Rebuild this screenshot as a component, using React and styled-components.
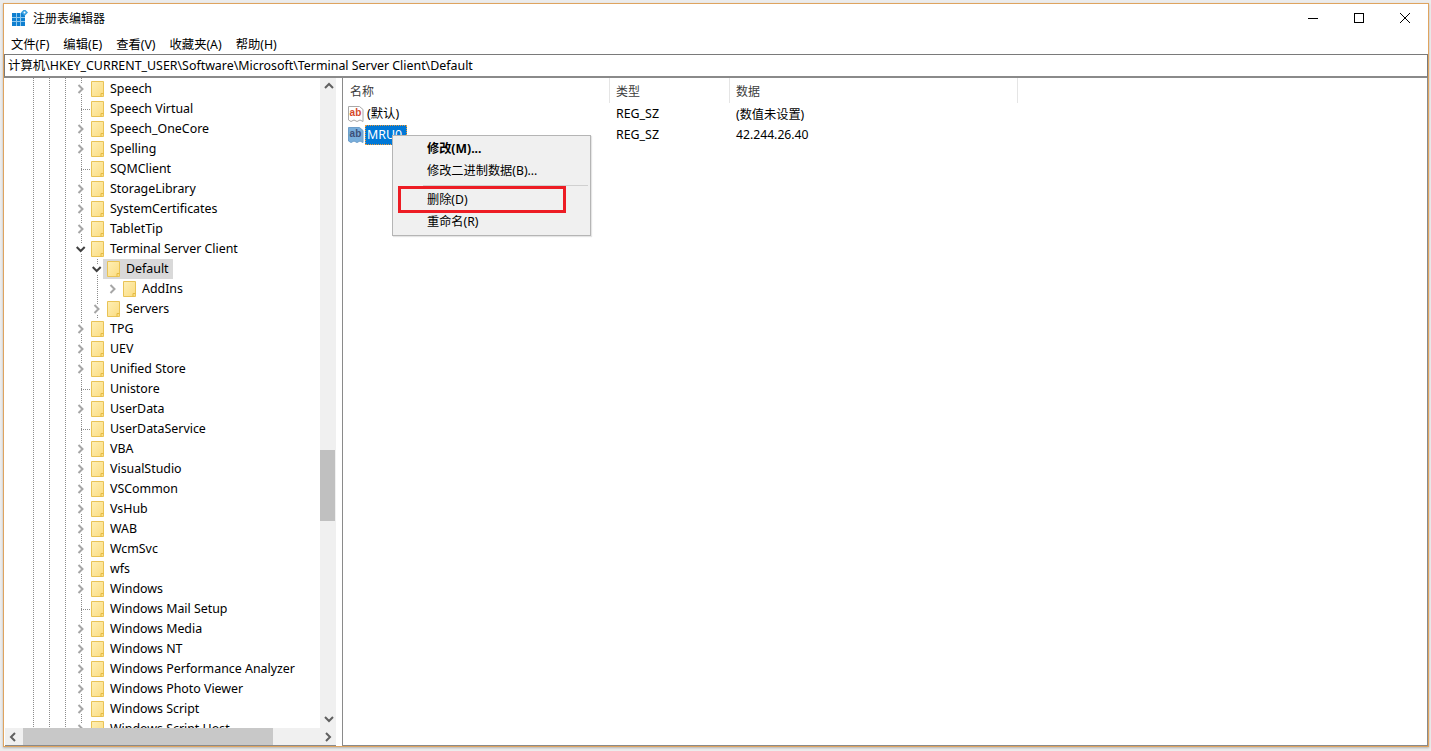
import styled, { createGlobalStyle } from "styled-components";

const GlobalStyle = createGlobalStyle`
    html, body {
        margin: 0;
        padding: 0;
        background: #ececec;
    }
    * {
        box-sizing: border-box;
    }
`;

const treeItems = [
    ["Speech", 0, "closed"],
    ["Speech Virtual", 0, "leaf"],
    ["Speech_OneCore", 0, "closed"],
    ["Spelling", 0, "closed"],
    ["SQMClient", 0, "leaf"],
    ["StorageLibrary", 0, "closed"],
    ["SystemCertificates", 0, "closed"],
    ["TabletTip", 0, "closed"],
    ["Terminal Server Client", 0, "open"],
    ["Default", 1, "open", true],
    ["AddIns", 2, "closed"],
    ["Servers", 1, "closed"],
    ["TPG", 0, "closed"],
    ["UEV", 0, "closed"],
    ["Unified Store", 0, "closed"],
    ["Unistore", 0, "leaf"],
    ["UserData", 0, "closed"],
    ["UserDataService", 0, "leaf"],
    ["VBA", 0, "closed"],
    ["VisualStudio", 0, "closed"],
    ["VSCommon", 0, "closed"],
    ["VsHub", 0, "closed"],
    ["WAB", 0, "closed"],
    ["WcmSvc", 0, "closed"],
    ["wfs", 0, "closed"],
    ["Windows", 0, "closed"],
    ["Windows Mail Setup", 0, "leaf"],
    ["Windows Media", 0, "closed"],
    ["Windows NT", 0, "closed"],
    ["Windows Performance Analyzer", 0, "closed"],
    ["Windows Photo Viewer", 0, "closed"],
    ["Windows Script", 0, "closed"],
    ["Windows Script Host", 0, "closed"],
];

const menus = ["文件(F)", "编辑(E)", "查看(V)", "收藏夹(A)", "帮助(H)"];

const RegeditIcon = () => (
    <svg width="16" height="16" viewBox="0 0 16 16">
        <rect x="0" y="3" width="13" height="13" fill="#0e7fd0" />
        <path d="M4.5 3v13M8.5 3v13M0 7.5h13M0 11.5h13" stroke="#8ec8ee" strokeWidth="1" />
        <rect x="10" y="0" width="5" height="5" transform="rotate(45 12.5 2.5)" fill="#3aa0e0" />
        <circle cx="12.5" cy="2.5" r="1" fill="#ffffff" />
    </svg>
);

const FolderIcon = () => (
    <svg width="13" height="16" viewBox="0 0 13 16">
        <defs>
            <linearGradient id="folderFill" x1="0" y1="0" x2="1" y2="1">
                <stop offset="0" stopColor="#feefb6" />
                <stop offset="1" stopColor="#fbdc80" />
            </linearGradient>
        </defs>
        <path d="M0.5 0.5h12v15h-12z" fill="url(#folderFill)" stroke="#e9c356" />
        <path d="M10 15.5v-3h2.5" fill="none" stroke="#e5bb42" />
    </svg>
);

const Chevron = ({ open }) => (
    <ChevronBox width="10" height="10" viewBox="0 0 10 10">
        {open ? (
            <path d="M0.7 3L4.7 7L8.7 3" fill="none" stroke="#404040" strokeWidth="2" />
        ) : (
            <path d="M2.5 1L6.5 5L2.5 9" fill="none" stroke="#a6a6a6" strokeWidth="2" />
        )}
    </ChevronBox>
);

const ValueIcon = ({ active }) => (
    <svg width="16" height="18" viewBox="0 0 16 18">
        <path
            d="M0.5 1.5h11l3.5 3v12l-3-1.5-3 1.5-3-1.5-3 1.5-2.5-1.5z"
            fill={active ? "#78aedc" : "#ffffff"}
            stroke={active ? "#6d9fcb" : "#a9a9a9"}
        />
        <text
            x="1.6"
            y="11"
            fontFamily="'Liberation Sans', sans-serif"
            fontWeight="700"
            fontSize="10"
            fill={active ? "#3c4f78" : "#d5492a"}
        >
            ab
        </text>
    </svg>
);

const ArrowIcon = ({ dir }) => {
    const paths = {
        up: "M1 6L5 2L9 6",
        down: "M1 2L5 6L9 2",
        left: "M6 1L2 5L6 9",
        right: "M3 1L7 5L3 9",
    };
    return (
        <svg width="10" height="10" viewBox="0 0 10 10">
            <path d={paths[dir]} fill="none" stroke="#606060" strokeWidth="2" />
        </svg>
    );
};

const App = () => {
    return (
        <>
            <GlobalStyle />
            <Page>
                <Window>
                    <TitleBar>
                        <TitleLeft>
                            <RegeditIcon />
                            <TitleText>注册表编辑器</TitleText>
                        </TitleLeft>
                        <Controls>
                            <ControlButton>
                                <svg width="10" height="10" viewBox="0 0 10 10">
                                    <path d="M0 5.5h10" stroke="#000" />
                                </svg>
                            </ControlButton>
                            <ControlButton>
                                <svg width="10" height="10" viewBox="0 0 10 10">
                                    <rect x="0.5" y="0.5" width="9" height="9" fill="none" stroke="#000" />
                                </svg>
                            </ControlButton>
                            <ControlButton>
                                <svg width="10" height="10" viewBox="0 0 10 10">
                                    <path d="M0 0L10 10M10 0L0 10" stroke="#000" />
                                </svg>
                            </ControlButton>
                        </Controls>
                    </TitleBar>
                    <MenuBar>
                        {menus.map((menu) => (
                            <MenuItem key={menu}>{menu}</MenuItem>
                        ))}
                    </MenuBar>
                    <AddressBar>计算机\HKEY_CURRENT_USER\Software\Microsoft\Terminal Server Client\Default</AddressBar>
                    <Panes>
                        <TreePane>
                            <TreeMain>
                                <TreeList>
                                    {treeItems.map(([name, depth, state, selected]) => (
                                        <TreeRow key={name} $depth={depth}>
                                            <Expander $leaf={state === "leaf"}>
                                                {state !== "leaf" && <Chevron open={state === "open"} />}
                                            </Expander>
                                            <TreeNode $selected={selected}>
                                                <FolderIcon />
                                                <TreeLabel>{name}</TreeLabel>
                                            </TreeNode>
                                        </TreeRow>
                                    ))}
                                </TreeList>
                                <VScroll>
                                    <ScrollArrow>
                                        <ArrowIcon dir="up" />
                                    </ScrollArrow>
                                    <VTrack>
                                        <VThumb />
                                    </VTrack>
                                    <ScrollArrow>
                                        <ArrowIcon dir="down" />
                                    </ScrollArrow>
                                </VScroll>
                            </TreeMain>
                            <HScroll>
                                <ScrollArrow>
                                    <ArrowIcon dir="left" />
                                </ScrollArrow>
                                <HTrack>
                                    <HThumb />
                                </HTrack>
                                <ScrollArrow>
                                    <ArrowIcon dir="right" />
                                </ScrollArrow>
                            </HScroll>
                        </TreePane>
                        <ListPane>
                            <ListHeader>
                                <HeaderCell $width={267} $first>名称</HeaderCell>
                                <HeaderCell $width={120}>类型</HeaderCell>
                                <HeaderCell $width={288}>数据</HeaderCell>
                            </ListHeader>
                            <ListRow>
                                <NameCell>
                                    <ValueIcon />
                                    <ValueName>(默认)</ValueName>
                                </NameCell>
                                <TypeCell>REG_SZ</TypeCell>
                                <DataCell>(数值未设置)</DataCell>
                            </ListRow>
                            <ListRow>
                                <NameCell>
                                    <ValueIcon active />
                                    <ValueName $selected>MRU0</ValueName>
                                </NameCell>
                                <TypeCell>REG_SZ</TypeCell>
                                <DataCell>42.244.26.40</DataCell>
                            </ListRow>
                            <ContextMenu>
                                <ContextItem $bold>修改(M)...</ContextItem>
                                <ContextItem>修改二进制数据(B)...</ContextItem>
                                <ContextSeparator />
                                <ContextItem $marked>删除(D)</ContextItem>
                                <ContextItem>重命名(R)</ContextItem>
                            </ContextMenu>
                        </ListPane>
                    </Panes>
                </Window>
            </Page>
        </>
    );
};

const uiFont = `"Noto Sans", "Noto Sans CJK SC", sans-serif`;
const dots = "repeating-linear-gradient(to bottom, #8c8c8c 0 1px, transparent 1px 2px)";

const Page = styled.div`
    width: 1431px;
    height: 751px;
    padding: 3px 2px 4px 3px;
    overflow: hidden;
    font-family: ${uiFont};
    font-size: 12.4px;
    color: #000000;
`;

const Window = styled.div`
    width: 100%;
    height: 100%;
    display: flex;
    flex-direction: column;
    background: #ffffff;
    border: 1px solid #dfa45f;
    box-shadow: 0 1px 2px rgba(0, 0, 0, 0.25);
`;

const TitleBar = styled.div`
    height: 30px;
    display: flex;
    align-items: center;
    justify-content: space-between;
    flex-shrink: 0;
`;

const TitleLeft = styled.div`
    display: flex;
    align-items: center;
    gap: 5px;
    padding-left: 8px;
    padding-bottom: 2px;
`;

const TitleText = styled.span`
    font-size: 12px;
`;

const Controls = styled.div`
    display: flex;
`;

const ControlButton = styled.div`
    width: 46px;
    height: 30px;
    padding-bottom: 2px;
    display: flex;
    align-items: center;
    justify-content: center;
`;

const MenuBar = styled.div`
    height: 20px;
    display: flex;
    align-items: center;
    gap: 14px;
    padding-left: 7px;
    flex-shrink: 0;
`;

const MenuItem = styled.span`
    font-size: 12.3px;
`;

const AddressBar = styled.div`
    height: 24px;
    flex-shrink: 0;
    display: flex;
    align-items: center;
    padding-left: 3px;
    padding-bottom: 2px;
    border-top: 1px solid #7a7a7a;
    border-left: 1px solid #7a7a7a;
    border-right: 1px solid #7a7a7a;
    border-bottom: 2px solid #8a8a8a;
`;

const Panes = styled.div`
    flex: 1;
    min-height: 0;
    display: flex;
    padding-left: 1px;
`;

const TreePane = styled.div`
    width: 331px;
    flex-shrink: 0;
    display: flex;
    flex-direction: column;
    border-bottom: 1px solid #8a8a8a;
`;

const TreeMain = styled.div`
    flex: 1;
    min-height: 0;
    display: flex;
`;

const TreeList = styled.div`
    flex: 1;
    overflow: hidden;
    padding-top: 1px;
    background-image: ${dots}, ${dots}, ${dots}, ${dots};
    background-size: 1px 100%;
    background-repeat: no-repeat;
    background-position: 28px 0, 44px 0, 60px 0, 76px 0;
`;

const TreeRow = styled.div`
    height: 20px;
    display: flex;
    align-items: center;
    padding-left: ${({ $depth }) => 72 + $depth * 16}px;
    white-space: nowrap;
    ${({ $depth }) =>
        $depth > 0 &&
        `
        background-image: ${dots};
        background-size: 1px 100%;
        background-position: 92px 0;
        background-repeat: no-repeat;
    `}
`;

const Expander = styled.span`
    width: 14px;
    height: 20px;
    flex-shrink: 0;
    display: flex;
    align-items: center;
    justify-content: flex-start;
    ${({ $leaf }) =>
        $leaf &&
        `
        background-image: repeating-linear-gradient(to right, #8c8c8c 0 1px, transparent 1px 2px);
        background-size: 9px 1px;
        background-position: 4px 10px;
        background-repeat: no-repeat;
    `}
`;

const ChevronBox = styled.svg`
    margin-left: -1px;
    background: #ffffff;
`;

const TreeNode = styled.div`
    height: 20px;
    display: flex;
    align-items: center;
    margin-left: -4px;
    padding: 0 4px;
    background: ${({ $selected }) => ($selected ? "#d9d9d9" : "transparent")};
`;

const TreeLabel = styled.span`
    margin-left: 6px;
    line-height: 20px;
`;

const VScroll = styled.div`
    width: 16px;
    flex-shrink: 0;
    display: flex;
    flex-direction: column;
    background: #f0f0f0;
`;

const ScrollArrow = styled.div`
    width: 17px;
    height: 17px;
    flex-shrink: 0;
    display: flex;
    align-items: center;
    justify-content: center;
`;

const VTrack = styled.div`
    flex: 1;
    padding-top: 355px;
`;

const VThumb = styled.div`
    width: 15px;
    height: 71px;
    background: #c0c0c0;
`;

const HScroll = styled.div`
    height: 17px;
    flex-shrink: 0;
    display: flex;
    background: #f0f0f0;
`;

const HTrack = styled.div`
    flex: 1;
    padding-left: 1px;
`;

const HThumb = styled.div`
    width: 250px;
    height: 100%;
    background: #c8c8c8;
`;

const ListPane = styled.div`
    position: relative;
    flex: 1;
    margin-left: 6px;
    border-left: 1px solid #8a8a8a;
    border-bottom: 1px solid #8a8a8a;
    border-right: 1px solid #8a8a8a;
`;

const ListHeader = styled.div`
    height: 25px;
    display: flex;
`;

const HeaderCell = styled.div`
    width: ${({ $width }) => $width}px;
    padding-left: ${({ $first }) => ($first ? "7px" : "6px")};
    display: flex;
    align-items: center;
    border-right: 1px solid #e5e5e5;
    color: #3c3c3c;
    font-size: 12px;
`;

const ListRow = styled.div`
    height: 21px;
    display: flex;
    align-items: center;
`;

const NameCell = styled.div`
    width: 267px;
    display: flex;
    align-items: center;
    gap: 1px;
    padding-left: 5px;
`;

const ValueName = styled.span`
    height: 20px;
    line-height: 19px;
    padding: ${({ $selected }) => ($selected ? "0 5px 0 2px" : "0 2px")};
    background: ${({ $selected }) => ($selected ? "#0078d7" : "transparent")};
    color: ${({ $selected }) => ($selected ? "#ffffff" : "#000000")};
    outline: ${({ $selected }) => ($selected ? "1px dotted #e89a3c" : "none")};
    outline-offset: -1px;
`;

const TypeCell = styled.div`
    width: 120px;
    padding-left: 6px;
`;

const DataCell = styled.div`
    padding-left: 6px;
    font-size: 12.2px;
`;

const ContextMenu = styled.div`
    position: absolute;
    left: 49px;
    top: 57px;
    width: 199px;
    height: 101px;
    padding: 1px 2px;
    background: #f0f0f0;
    border: 1px solid #b5b5b5;
    box-shadow: 1px 1px 1px rgba(0, 0, 0, 0.1);
`;

const ContextItem = styled.div`
    position: relative;
    height: 22px;
    display: flex;
    align-items: center;
    padding-left: 32px;
    font-size: 12.2px;
    font-weight: ${({ $bold }) => ($bold ? 700 : 400)};
    ${({ $marked }) =>
        $marked &&
        `
        &::after {
            content: "";
            position: absolute;
            box-sizing: border-box;
            left: 3px;
            top: -2px;
            width: 168px;
            height: 27px;
            border: 3px solid #ed1c24;
        }
    `}
`;

const ContextSeparator = styled.div`
    height: 1px;
    margin: 4px 0 2px 28px;
    background: #d0d0d0;
`;

export default App;
